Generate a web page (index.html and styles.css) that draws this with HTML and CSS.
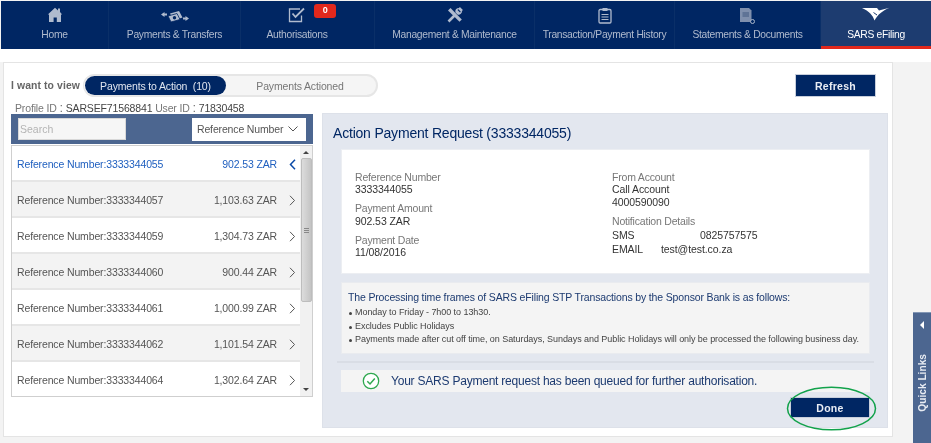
FILE: index.html
```html
<!DOCTYPE html>
<html lang="en">
<head>
<meta charset="utf-8">
<title>SARS eFiling - Action Payment Request</title>
<link rel="stylesheet" href="styles.css">
</head>
<body>
<div class="page">
  <nav class="nav">
    <a class="nav-item">
      <div class="icon-box"><svg width="16" height="16" viewBox="0 0 16 16"><path d="M11 1.500h2v3.600l2.200 2.400H14V15H9.800v-4.600H6.600V15H2V7.500H.8L8 .8l3 2.800z" fill="currentColor"/></svg></div>
      <span>Home</span>
    </a>
    <a class="nav-item">
      <div class="icon-box"><svg width="30" height="18" viewBox="0 0 30 18"><path d="M1 7.500l3.500-2.500v1.500h2.500v2H4.500V10zM29 11.500L25.500 9v1.500H23v2h2.500V14z" fill="currentColor"/><path d="M10 6.500l9-2.500 3.500 6.500-9 3z" fill="currentColor"/><path d="M8 9l9-2.500 3 6L11 15z" fill="currentColor" stroke="#002663" stroke-width=".8"/><circle cx="14.500" cy="10.800" r="1.700" fill="#002663"/></svg></div>
      <span>Payments &amp; Transfers</span>
    </a>
    <a class="nav-item nav-item-auth">
      <div class="icon-box"><svg width="18" height="16" viewBox="0 0 18 16"><path d="M13.500 8.500V14.500H1.500V2H12" fill="none" stroke="currentColor" stroke-width="1.300"/><path d="M4.500 6.500l3 3.500L16 1.500" fill="none" stroke="currentColor" stroke-width="1.800"/></svg></div>
      <span>Authorisations</span>
      <b class="badge">0</b>
    </a>
    <a class="nav-item">
      <div class="icon-box"><svg width="16" height="16" viewBox="0 0 16 16"><path d="M1.500 14.500L8 8M12 1l3 3" stroke="currentColor" stroke-width="2.600" fill="none"/><path d="M1 3.500L3.500 1 14.800 12.500 12.500 14.800z" fill="currentColor"/><path d="M8.500 5.500a3.500 3.500 0 0 1 4-4.500L10.500 3l2.500 2.500 2-2a3.500 3.500 0 0 1-4.500 4z" fill="currentColor"/></svg></div>
      <span>Management &amp; Maintenance</span>
    </a>
    <a class="nav-item">
      <div class="icon-box"><svg width="14" height="17" viewBox="0 0 14 17"><rect x="1" y="2.500" width="12" height="13.500" rx="1.200" fill="none" stroke="currentColor" stroke-width="1.300"/><rect x="4.500" y="1" width="5" height="3" fill="currentColor"/><path d="M3.500 7.500h7M3.500 10h7M3.500 12.500h7" stroke="currentColor" stroke-width="1.200"/></svg></div>
      <span>Transaction/Payment History</span>
    </a>
    <a class="nav-item">
      <div class="icon-box"><svg width="17" height="18" viewBox="0 0 17 18"><path d="M1 1h9l2.500 2.500V15H1z" fill="#7f8fad"/><path d="M3.500 5h6.500v5H3.500z" fill="#5f7396"/><circle cx="13.500" cy="14.500" r="2" fill="#002663" stroke="#aab6ca" stroke-width="1"/></svg></div>
      <span>Statements &amp; Documents</span>
    </a>
    <a class="nav-item nav-item-active">
      <div class="icon-box"><svg width="28" height="14" viewBox="0 0 28 14"><path d="M0 1h15l2 2.500 10.500-2.800C21 3.500 15.500 7.500 12.500 13.500 11 8.500 7 4 0 1z" fill="#fff"/><path d="M11.500 5.500l3.500 2.500" stroke="#1d3c70" stroke-width="1"/></svg></div>
      <span>SARS eFiling</span>
    </a>
  </nav>

  <div class="content">
    <main class="card">
      <div class="toolbar">
        <span class="view-label">I want to view</span>
        <div class="toggle">
          <span class="toggle-on">Payments to Action&nbsp; (10)</span>
          <span class="toggle-off">Payments Actioned</span>
        </div>
        <button class="btn btn-refresh">Refresh</button>
      </div>
      <div class="profile">
        <span class="muted">Profile ID</span> <span class="colon">:</span> <span class="strong">SARSEF71568841</span>
        <span class="muted">User ID</span> <span class="colon">:</span> <span class="strong">71830458</span>
      </div>

      <div class="columns">
        <section class="left">
          <div class="filter">
            <input class="search" placeholder="Search">
            <div class="select">Reference Number
              <svg width="10" height="6" viewBox="0 0 10 6"><path d="M.5.5L5 5 9.500.5" fill="none" stroke="#555" stroke-width="1"/></svg>
            </div>
          </div>
          <div class="list">
            <div class="rows">
              <div class="row row-current"><span>Reference Number:3333344055</span><span class="amount">902.53 ZAR</span><svg class="chev" width="7" height="11" viewBox="0 0 7 11"><path d="M6 .8L1.500 5.500 6 10.200" fill="none" stroke="#0a4aa8" stroke-width="1.500"/></svg></div>
              <div class="row row-alt"><span>Reference Number:3333344057</span><span class="amount">1,103.63 ZAR</span><svg class="chev" width="7" height="11" viewBox="0 0 7 11"><path d="M1 .8L5.500 5.500 1 10.200" fill="none" stroke="#555" stroke-width="1"/></svg></div>
              <div class="row"><span>Reference Number:3333344059</span><span class="amount">1,304.73 ZAR</span><svg class="chev" width="7" height="11" viewBox="0 0 7 11"><path d="M1 .8L5.500 5.500 1 10.200" fill="none" stroke="#555" stroke-width="1"/></svg></div>
              <div class="row row-alt"><span>Reference Number:3333344060</span><span class="amount">900.44 ZAR</span><svg class="chev" width="7" height="11" viewBox="0 0 7 11"><path d="M1 .8L5.500 5.500 1 10.200" fill="none" stroke="#555" stroke-width="1"/></svg></div>
              <div class="row"><span>Reference Number:3333344061</span><span class="amount">1,000.99 ZAR</span><svg class="chev" width="7" height="11" viewBox="0 0 7 11"><path d="M1 .8L5.500 5.500 1 10.200" fill="none" stroke="#555" stroke-width="1"/></svg></div>
              <div class="row row-alt"><span>Reference Number:3333344062</span><span class="amount">1,101.54 ZAR</span><svg class="chev" width="7" height="11" viewBox="0 0 7 11"><path d="M1 .8L5.500 5.500 1 10.200" fill="none" stroke="#555" stroke-width="1"/></svg></div>
              <div class="row row-last"><span>Reference Number:3333344064</span><span class="amount">1,302.64 ZAR</span><svg class="chev" width="7" height="11" viewBox="0 0 7 11"><path d="M1 .8L5.500 5.500 1 10.200" fill="none" stroke="#555" stroke-width="1"/></svg></div>
            </div>
            <div class="scrollbar">
              <i class="arrow-up"></i>
              <div class="thumb"><i class="grip"></i></div>
              <i class="arrow-down"></i>
            </div>
          </div>
        </section>

        <section class="detail">
          <h1 class="detail-title">Action Payment Request (3333344055)</h1>
          <div class="summary">
            <div class="summary-col">
              <div class="group"><div class="label">Reference Number</div><div class="value">3333344055</div></div>
              <div class="group"><div class="label">Payment Amount</div><div class="value">902.53 ZAR</div></div>
              <div class="group"><div class="label">Payment Date</div><div class="value">11/08/2016</div></div>
            </div>
            <div class="summary-col">
              <div class="group"><div class="label">From Account</div><div class="value">Call Account</div><div class="value">4000590090</div></div>
              <div class="group"><div class="label">Notification Details</div>
                <div class="contact"><span class="contact-sms">SMS</span><span>0825757575</span></div>
                <div class="contact"><span class="contact-email">EMAIL</span><span>test@test.co.za</span></div>
              </div>
            </div>
          </div>
          <div class="note">
            <p class="note-title">The Processing time frames of SARS eFiling STP Transactions by the Sponsor Bank is as follows:</p>
            <ul class="note-list">
              <li>Monday to Friday - 7h00 to 13h30.</li>
              <li>Excludes Public Holidays</li>
              <li>Payments made after cut off time, on Saturdays, Sundays and Public Holidays will only be processed the following business day.</li>
            </ul>
          </div>
          <hr class="rule">
          <div class="success">
            <svg width="18" height="18" viewBox="0 0 18 18"><circle cx="9" cy="9" r="7.700" fill="#fff" stroke="#2fa84f" stroke-width="1.300"/><path d="M5.300 9.300l2.700 2.700 4.800-5.500" fill="none" stroke="#2fa84f" stroke-width="1.500"/></svg>
            <span>Your SARS Payment request has been queued for further authorisation.</span>
          </div>
          <div class="actions">
            <div class="done-wrap">
              <button class="btn btn-done">Done</button>
              <svg class="ring" width="91" height="45" viewBox="0 0 91 45"><ellipse cx="45.500" cy="22.500" rx="44" ry="21.300" fill="none" stroke="#12a24b" stroke-width="1.500"/></svg>
            </div>
          </div>
        </section>
      </div>
    </main>
  </div>

  <aside class="quick">
    <i class="quick-arrow"></i>
    <span class="quick-text">Quick Links</span>
  </aside>
</div>
</body>
</html>
```
FILE: styles.css
```css
* { box-sizing: border-box; }
html, body { margin: 0; height: 100%; }
body { font-family: "Liberation Sans", Arial, sans-serif; background: #f3f3f3; overflow: hidden; }
.page { position: relative; width: 931px; height: 443px; overflow: hidden; background: #f3f3f3; filter: blur(.3px); }

.nav { display: grid; grid-template-columns: 108px 132px 134px 160px 140px 146px 110px; height: 48px; margin: 1px 0 0 1px; background: #002663; width: 930px; }
.nav-item { position: relative; display: flex; flex-direction: column; align-items: center; padding-top: 6px; color: #b0bbce; font-size: 10.300px; letter-spacing: -.3px; border-right: 1px solid #0a2f68; }
.icon-box { display: flex; justify-content: center; align-items: flex-start; height: 21px; }
.nav-item span { line-height: 13px; white-space: nowrap; }
.nav-item-auth { padding-right: 21px; }
.nav-item-active { background: #1d3c70; color: #fff; border-right: 0; border-bottom: 3px solid #e2281c; }
.badge { position: absolute; left: 73px; top: 3px; width: 22px; height: 14px; border-radius: 3px; background: #e2281c; color: #fff; font-size: 9px; line-height: 12px; text-align: center; }

.content { height: 394px; padding: 13px 38px 0 3px; background: linear-gradient(#fff 13px, #f3f3f3 13px); }
.card { height: 375px; padding: 11px 4px 0 7px; background: #fff; border: 1px solid #e4e4e4; }

.toolbar { display: flex; align-items: center; height: 23px; }
.view-label { width: 72px; font-size: 10.400px; font-weight: bold; color: #666; letter-spacing: .1px; }
.toggle { display: flex; align-items: center; width: 295px; height: 23px; padding: 0 2px; border: 2px solid #e6e6e6; border-left-width: 1px; border-radius: 12px; background: #f5f5f5; font-size: 10.500px; letter-spacing: -.15px; }
.toggle-on { display: flex; align-items: center; justify-content: center; width: 141px; height: 19px; margin-left: -1px; border-radius: 10px; background: #002663; color: #dfe5ef; }
.toggle-off { flex: 1; text-align: center; color: #777; }
.btn { border: 1px solid #c8cfdc; background: #002663; color: #e9edf4; font: bold 10.500px "Liberation Sans", Arial, sans-serif; letter-spacing: .3px; }
.btn-refresh { width: 81px; height: 23px; margin-left: auto; margin-right: 12px; }

.profile { height: 16px; padding: 4px 0 0 4px; font-size: 10.500px; letter-spacing: -.15px; line-height: 13px; white-space: nowrap; }
.muted { color: #777; }
.strong { color: #444; }
.colon { font-size: 13px; color: #777; }

.columns { display: flex; gap: 9px; height: 315px; }
.left { width: 302px; margin-top: 1px; }
.filter { display: flex; justify-content: space-between; align-items: center; height: 30px; padding: 0 7px; background: #4c6690; }
.search { width: 108px; height: 22px; padding: 0 1px 1px; border: 1px solid #d8d8d8; background: #f6f6f6; font: 10.500px "Liberation Sans", Arial, sans-serif; }
.search::placeholder { color: #b4b4b4; opacity: 1; }
.select { display: flex; align-items: center; justify-content: space-between; width: 114px; height: 23px; padding: 0 8px 0 5px; background: #fff; font-size: 10.500px; letter-spacing: -.15px; color: #555; }
.list { display: flex; height: 252px; margin-top: 1px; border: 1px solid #cfcfcf; background: #fff; }
.rows { flex: 1; min-width: 0; display: flex; flex-direction: column; }
.row { display: flex; align-items: center; flex: none; height: 36px; padding: 2px 4px 0 5px; border-bottom: 2px solid #e6e6e6; font-size: 10.500px; letter-spacing: -.14px; color: #555; white-space: nowrap; }
.row-alt { background: #f3f3f3; }
.row-current { color: #1f5fbf; }
.row-last { height: 33px; padding-top: 3px; border-bottom: 0; }
.amount { margin-left: auto; }
.chev { margin-left: 12px; flex: none; }
.scrollbar { position: relative; display: flex; flex-direction: column; align-items: center; flex: none; width: 12px; background: #f1f1f1; }
.arrow-up, .arrow-down { width: 0; height: 0; border: 3px solid transparent; }
.arrow-up { margin-top: 2px; border-bottom: 3px solid #444; }
.arrow-down { margin-top: auto; margin-bottom: 2px; border-top: 3px solid #444; }
.thumb { display: flex; align-items: center; justify-content: center; width: 11px; height: 144px; margin-top: 4px; border: 1px solid #bdbdbd; border-radius: 2px; background: linear-gradient(90deg, #dcdcdc, #c4c4c4); }
.grip { width: 5px; height: 5px; border-top: 1px solid #888; border-bottom: 1px solid #888; background: linear-gradient(#888, #888) center / 5px 1px no-repeat; }

.detail { position: relative; width: 566px; padding: 0 17px 0 18px; background: #e3e7ef; border: 1px solid #dde1e9; }
.detail-title { height: 35px; margin: 0 0 0 -8px; font-size: 14px; letter-spacing: -.2px; font-weight: normal; line-height: 39px; color: #002663; white-space: nowrap; }
.summary { display: flex; height: 125px; padding: 21px 13px 0; background: #fff; border: 1px solid #eceef2; font-size: 10.500px; letter-spacing: -.08px; line-height: 12.400px; }
.summary-col { flex: none; width: 257px; }
.group { margin-bottom: 6.500px; }
.label { color: #777; font-size: 10.500px; letter-spacing: -.2px; }
.value { color: #333; }
.contact { display: flex; margin-top: 1.500px; color: #333; }
.contact-sms { width: 88px; }
.contact-email { width: 49px; }
.note { height: 72px; margin-top: 8px; padding: 7px 6px 0; background: #f4f4f4; border: 1px solid #e9ebef; }
.note-title { margin: 0 0 2px; font-size: 10.500px; letter-spacing: -.15px; line-height: 14px; color: #1c3a70; white-space: nowrap; }
.note-list { margin: 0; padding: 0; list-style: none; font-size: 9px; letter-spacing: -.06px; line-height: 13.500px; color: #444; }
.note-list li { position: relative; padding-left: 7px; white-space: nowrap; }
.note-list li::before { content: ""; position: absolute; left: 1px; top: 6px; width: 3px; height: 3px; border-radius: 50%; background: #444; }
.rule { height: 2px; margin: 7px -4px; border: 0; background: #d9dde5; }
.success { display: flex; align-items: center; height: 22px; padding-left: 21px; gap: 11px; background: #f4f4f4; font-size: 12px; letter-spacing: -.22px; color: #1c3a70; white-space: nowrap; }
.actions { display: flex; justify-content: flex-end; margin-top: 5px; }
.done-wrap { position: relative; }
.btn-done { display: block; width: 80px; height: 21px; }
.ring { position: absolute; left: -4px; top: -11px; }

.quick { position: absolute; right: 0; bottom: 0; display: flex; flex-direction: column; align-items: center; width: 18px; height: 131px; background: #4c6690; border-top: 1px solid #8296b4; }
.quick-arrow { width: 0; height: 0; margin-top: 8px; border: 4px solid transparent; border-right: 4px solid #fff; border-left: 0; }
.quick-text { margin-top: 25px; writing-mode: vertical-rl; transform: rotate(180deg); font-size: 10.200px; font-weight: bold; color: #e8ecf3; white-space: nowrap; }
```
